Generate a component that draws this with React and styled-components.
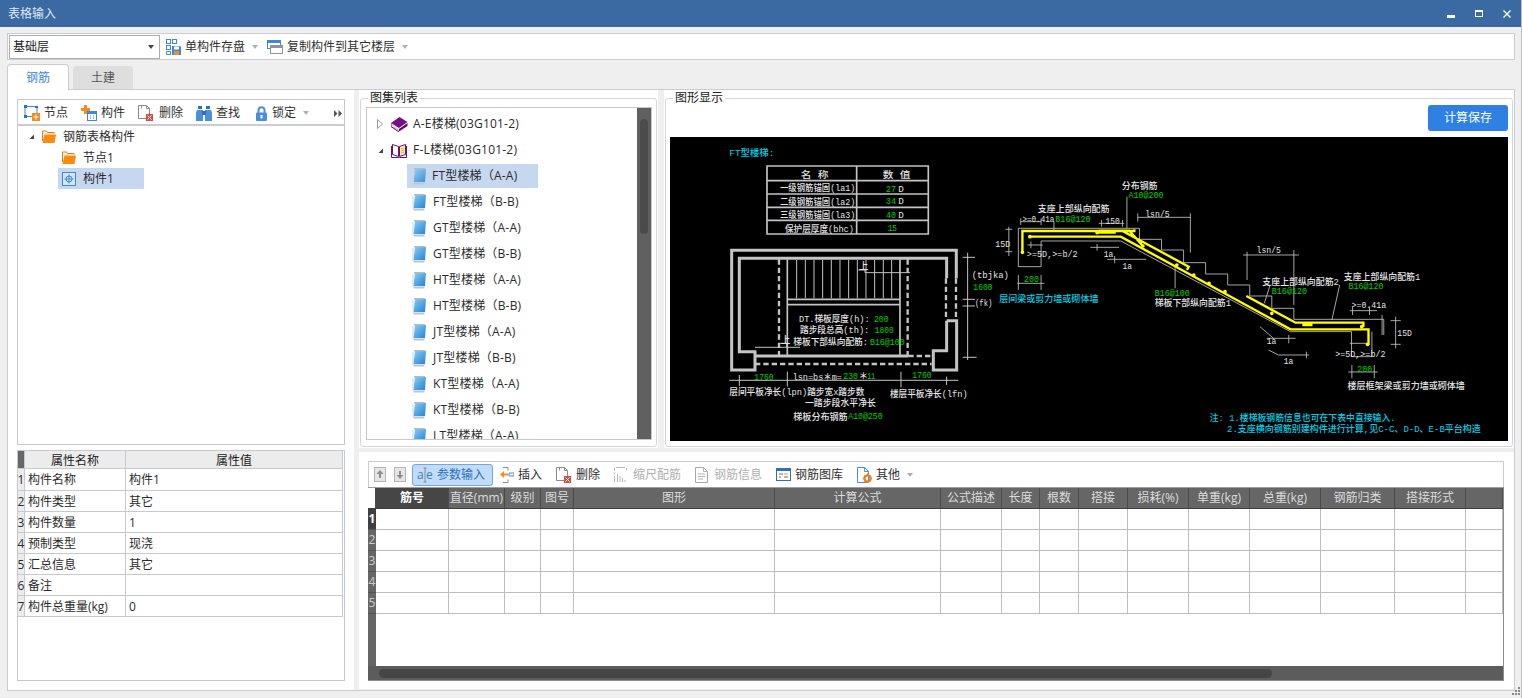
import React from "react";
import styled, { createGlobalStyle } from "styled-components";

const Global = createGlobalStyle`
  html, body { margin: 0; padding: 0; background: #efefef; overflow: hidden; }
  * { box-sizing: border-box; }
  body { font: 12px/16px "Open Sans", "Noto Sans CJK SC", sans-serif; color: #2b2b2b; }
`;

const Win = styled.div`width: 1522px; height: 698px; display: flex; flex-direction: column; border-right: 1px solid #b9bdc3; background: #efefef;`;
const TitleBar = styled.header`height: 27px; flex: none; background: #3b6aa3; color: #dfe8f3; display: flex; align-items: center; padding: 0 10px 0 8px; justify-content: space-between;`;
const WinBtns = styled.div`display: flex; gap: 20px; align-items: center;`;
const Main = styled.main`flex: 1; padding: 6px 6px 0 7px; display: flex; flex-direction: column;`;
const TopBar = styled.div`height: 27px; flex: none; border: 1px solid #c9cdd1; background: #fff; display: flex; align-items: center; padding-left: 1px;`;
const FloorSelect = styled.div`width: 151px; height: 24px; border: 1px solid #a9aeb4; color: #1a1a1a; display: flex; align-items: center; justify-content: space-between; padding: 0 5px 0 3px; margin-right: 6px;`;
const Caret = styled.i`display: inline-block; width: 0; height: 0; border: 3px solid transparent; border-top: 4px solid ${p => p.$tone || "#aab0b6"}; border-bottom: 0; margin-left: ${p => p.$left ?? 3}px;`;
const Tool = styled.span`display: inline-flex; align-items: center; gap: ${p => p.$gap ?? 4}px; margin-left: ${p => p.$before ?? 0}px; margin-right: ${p => p.$space ?? 0}px; color: ${p => p.$off ? "#b0b0b0" : "#303030"}; white-space: nowrap; flex: none;`;
const TabRow = styled.nav`height: 26px; margin-top: 4px; margin-bottom: -1px; display: flex; align-items: flex-end; gap: 4px; position: relative; z-index: 1; flex: none;`;
const Tab = styled.div`
  height: ${p => p.$on ? 26 : 23}px; width: ${p => p.$on ? 62 : 60}px; margin-bottom: ${p => p.$on ? 0 : 1}px; display: flex; align-items: center; justify-content: center;
  background: ${p => p.$on ? "#fff" : "#dedede"}; color: ${p => p.$on ? "#3f86e2" : "#555"};
  border: ${p => p.$on ? "1px solid #c9cdd1" : "0"}; border-bottom: 0; border-radius: 4px 4px 0 0;
`;
const Pane = styled.section`width: 1508px; height: 602px; flex: none; border: 1px solid #c9cdd1; background: #fff; display: grid; grid-template-columns: 346px 1fr;`;
const LeftCol = styled.div`padding: 9px 9px 8px; display: flex; flex-direction: column; gap: 5px;`;
const Panel = styled.div`border: 1px solid #c5c9ce; background: #fff;`;
const TreePanel = styled(Panel)`height: 346px;`;
const TreeBar = styled.div`height: 26px; display: flex; align-items: center; padding: 2px 2px 0 6px; border-bottom: 2px solid #c9cdd1;`;
const MoreArrows = styled.span`margin-left: auto; margin-right: 0;`;
const Tree = styled.div`padding: 0;`;
const TreeRow = styled.div`height: 21px; display: flex; align-items: center; gap: ${p => p.$gap ?? 6}px; margin-left: ${p => p.$indent}px; width: ${p => p.$w ? p.$w + "px" : "auto"}; background: ${p => p.$sel ? "#c6d8ef" : "transparent"}; padding-left: ${p => p.$pad ?? 0}px;`;
const PropsPanel = styled(Panel)`height: 231px;`;
const propCols = "7px 101px 217px";
const PropRow = styled.div`display: grid; grid-template-columns: ${propCols}; height: ${p => p.$h || 21}px;`;
const PropCell = styled.div`
  border-right: 1px solid #c3cad4; border-bottom: 1px solid #c3cad4; display: flex; align-items: center; padding: ${p => p.$head ? "2px 0 0" : "1px 0 0 3px"}; overflow: hidden;
  justify-content: ${p => p.$head ? "center" : "flex-start"}; background: ${p => p.$head ? "#ececec" : "#fff"}; color: ${p => p.$head ? "#222" : "#2b2b2b"};
`;
const PropNum = styled.div`border-right: 1px solid #c3cad4; border-bottom: 1px solid #c3cad4; background: ${p => p.$corner ? "#666" : "#ececec"}; display: flex; align-items: center; justify-content: center; font-size: 12px; overflow: visible; padding-top: 1px;`;
const RightCol = styled.div`background: #efefef; padding-left: 5px; display: flex; flex-direction: column; gap: 5px; min-width: 0;`;
const TopRow = styled.div`display: grid; grid-template-columns: 299px 1fr; gap: 6px; height: 357px;`;
const GroupCell = styled.div`background: #fff; min-width: 0; padding: 0 1px 1px;`;
const Group = styled.fieldset`margin: 0; padding: 1px ${p => p.$r}px ${p => p.$b}px ${p => p.$l}px; height: 100%; border: 1px solid #d4d6d9; border-radius: 3px; min-width: 0; display: block;`;
const GroupLegend = styled.legend`margin-left: ${p => p.$left ?? 2}px; padding: 0 2px; line-height: 16px; color: #222;`;
const AtlasList = styled.div`height: 333px; border: 1px solid #c5c9ce; position: relative; overflow: hidden; padding-top: 3px; letter-spacing: .2px;`;
const AtlasRow = styled.div`height: 26px; display: flex; align-items: center; padding-left: ${p => p.$indent}px;`;
const AtlasRowInner = styled.div`height: 24px; width: ${p => p.$w}px; display: flex; align-items: center; gap: ${p => p.$gap ?? 6}px; background: ${p => p.$sel ? "#c6d8ef" : "transparent"}; padding-left: ${p => p.$pad ?? 0}px;`;
const Expander = styled.span`display: block; flex: none; margin-right: ${p => p.$space}px;`;
const ListScroll = styled.div`position: absolute; right: 0; top: 0; bottom: 0; width: 14px; background: #606060;`;
const ListThumb = styled.div`margin: 11px auto 0; width: 8px; height: 115px; border-radius: 4px; background: #4b4b4b;`;
const ActionRow = styled.div`display: flex; justify-content: flex-end; margin-top: -2px;`;
const CalcBtn = styled.button`width: 80px; height: 26px; border: 0; border-radius: 3px; background: #2f80e3; color: #fff; font: inherit;`;
const Drawing = styled.svg`display: block; margin-top: 6px; background: #000; width: 838px; height: 304px; flex: none;`;
const BottomCell = styled.div`height: 237px; background: #fff; padding: 9px 0 0 9px;`;
const GridBar = styled.div`width: 1136px; height: 26px; border: 1px solid #c9cdd1; border-bottom: 0; display: flex; align-items: center; padding-left: 5px; gap: 14px;`;
const ActiveTool = styled.span`width: 81px; height: 22px; border: 1px solid #6ea9e4; border-radius: 3px; background: #c0dcf9; color: #2c6fbf; display: inline-flex; align-items: center; padding-left: 4px; gap: 4px; white-space: nowrap; margin: 0 -7px 0 -8px;`;
const Stepper = styled.span`display: inline-flex; gap: 8px; margin-right: 0;`;
const GridBox = styled.div`width: 1136px; height: 194px; display: flex; flex-direction: column; border-right: 1px solid #8a8e94; border-bottom: 1px solid #8a8e94; border-top: 1px solid #9b9fa5;`;
const gridCols = "8px 73px 56px 36px 33px 201px 166px 61px 38px 39px 49px 61px 61px 71px 74px 71px 37px";
const GridHead = styled.div`display: grid; grid-template-columns: ${gridCols}; height: 21px; flex: none; background: #666;`;
const HeadCell = styled.div`
  display: flex; align-items: center; justify-content: center; white-space: nowrap; border-right: 1px solid #4a4a4a; border-bottom: 1px solid #3e3e3e;
  background: ${p => p.$corner ? "#fff" : p.$sel ? "#464646" : "#666"}; color: ${p => p.$sel ? "#fff" : "#dcdcdc"}; font-weight: ${p => p.$sel ? 700 : 400};
`;
const GridRow = styled.div`display: grid; grid-template-columns: ${gridCols}; height: 21px; flex: none;`;
const RowNum = styled.div`background: ${p => p.$sel ? "#404040" : "#666"}; color: ${p => p.$sel ? "#fff" : "#ccc"}; font-weight: ${p => p.$sel ? 700 : 400}; display: flex; align-items: center; justify-content: center; overflow: visible; border-bottom: 1px solid #555;`;
const GridCell = styled.div`border-right: 1px solid #bdbdbd; border-bottom: 1px solid #bdbdbd; background: #fff;`;
const GridFill = styled.div`flex: 1; background: #fff; border-left: 8px solid #666;`;
const HScroll = styled.div`height: 14px; flex: none; background: #5c5c5c; padding: 3px 0 2px 11px;`;
const HThumb = styled.div`width: 893px; height: 9px; border-radius: 5px; background: #454545;`;
const Grip = styled.svg`position: absolute; right: 2px; bottom: 3px;`;
const WinFrame = styled.div`position: relative;`;

const CadLine = styled.path`fill: none; stroke: ${p => p.$c || "#c4c4c4"}; stroke-width: ${p => p.$w || 3}px;`;
const CadText = styled.text`font-family: "Liberation Mono", "Noto Sans CJK SC", monospace; font-size: 28px; font-weight: 500; fill: ${p => ({ g: "#00d000", c: "#00d0e8" }[p.$t] || "#e4e4e4")};`;

const L = ({ x, y, t, c, w }) => (
  <CadText x={x} y={y + 3} $t={c} dominantBaseline="central" textLength={w} lengthAdjust={w ? "spacingAndGlyphs" : undefined}>{t}</CadText>
);

/* ---------- icons ---------- */
const Svg = ({ s = 16, w, h, children }) => <svg width={w || s} height={h || s} viewBox={`0 0 ${w || s} ${h || s}`} style={{ display: "block", flex: "none" }}>{children}</svg>;
const blue = "#3f87d8";
const FloorSave = () => (<Svg w={15} h={16}><rect x=".5" y=".5" width="4" height="4" fill="none" stroke={blue} /><rect x="6.5" y=".5" width="4" height="4" fill="none" stroke={blue} /><rect x=".5" y="6.5" width="4" height="4" fill="none" stroke={blue} /><path d="M.5 12.5h4v3h-4z" fill="none" stroke={blue} /><path d="M6 7h8l1 1v8H6z" fill="#3f87d8" /><rect x="8" y="7.500" width="5" height="3" fill="#fff" /><rect x="8" y="12" width="5" height="4" fill="#f39020" /></Svg>);
const CopyFloor = () => (<Svg s={16}><rect x=".5" y="1.500" width="13" height="8" fill="#fff" stroke={blue} /><rect x="0" y="1" width="14" height="3" fill={blue} /><rect x="3.500" y="6.500" width="12" height="8" fill="#fff" stroke="#8d9399" /><rect x="3" y="6" width="13" height="3" fill="#8d9399" /></Svg>);
const NodeIcon = () => (<Svg s={16}><rect x="1" y="1.500" width="12" height="10" fill="none" stroke="#3f87d8" strokeWidth="1" /><rect x="0" y="0" width="3" height="3" fill="#2f6fb8" /><rect x="11" y="1" width="3" height="2" fill="#2f6fb8" /><rect x="0" y="10" width="3" height="3" fill="#2f6fb8" /><rect x="8" y="8" width="8" height="8" fill="#f58c1e" /><path d="M12 9.500v5M9.500 12h5" stroke="#fff" /></Svg>);
const PartIcon = () => (<Svg s={16}><path d="M3 0h3v3h3v3H6v3H3V6H0V3h3z" fill="#f58c1e" /><rect x="6.500" y="6.500" width="9" height="9" fill="#fff" stroke={blue} /><rect x="6" y="6" width="10" height="3" fill={blue} /><path d="M9 11h1M12 11h1M9 13h1M12 13h1" stroke={blue} /></Svg>);
const DelDoc = () => (<Svg s={16}><path d="M.5.5h8l3 3v10H.5z" fill="#fff" stroke="#8c8c8c" /><path d="M3.500 3.500v-3" stroke="#8c8c8c" /><path d="M8.500.5v3h3" fill="none" stroke="#8c8c8c" /><rect x="8" y="9" width="7" height="7" fill="#d94b43" /><path d="M9.500 10.500l4 4M13.500 10.500l-4 4" stroke="#fff" /></Svg>);
const Binoc = () => (<Svg w={16} h={15}><path d="M2 0h4v3H2zM10 0h4v3h-4z" fill="#2f6fb8" /><path d="M1 4h6v11H0V7zM9 4h6l1 3v8H9z" fill="#4b8fdc" /><rect x="6" y="5" width="4" height="4" fill="#2f6fb8" /></Svg>);
const Lock = () => (<Svg w={13} h={15}><path d="M3.500 7V4.200a3 3 0 0 1 6 0V7" fill="none" stroke="#4b8fdc" strokeWidth="2" /><rect x="1" y="6.500" width="11" height="8.500" rx="1" fill="#4b8fdc" /><rect x="5.500" y="9" width="2" height="3.500" fill="#fff" /></Svg>);
const Folder = () => (<Svg w={14} h={13}><path d="M.5 11V1h4l1 1.500h6.500V4" fill="none" stroke="#e8780a" /><path d="M1.500 3h10v1h-10z" fill="#ffe2bd" /><path d="M2.500 4.500H14L12.500 13H0.500z" fill="#ff8a10" /></Svg>);
const PartTree = () => (<Svg s={14}><rect x=".5" y=".5" width="13" height="13" fill="#d4e6fa" stroke={blue} /><circle cx="7" cy="7" r="3" fill="none" stroke={blue} /><path d="M7 2.500v9M2.500 7h9" stroke={blue} /></Svg>);
const TriDown = () => (<Svg s={7}><path d="M6 1.500V6H1.500z" fill="#444" /></Svg>);
const TriRight = () => (<Svg w={6} h={10}><path d="M.5.5L5.500 5 .5 9.500z" fill="#fff" stroke="#999" /></Svg>);
const MoreIcon = () => (<Svg w={8} h={7}><path d="M0 0l3.500 3.500L0 7zM4.500 0L8 3.500 4.500 7z" fill="#555" /></Svg>);
const BookClosed = () => (<Svg w={17} h={15}><path d="M8.500 0l8 5-8.500 6L0 6z" fill="#7a0f82" /><path d="M1 7l7 5v2.500L1.500 10.500z" fill="#d9c7dc" /><path d="M8 12l8.500-6v3L8 14.500z" fill="#5b0a62" /><path d="M0 6v3.500L8 15" fill="none" stroke="#5b0a62" /></Svg>);
const BookOpen = () => (<Svg w={16} h={16}><path d="M1.500 2.500l6 2v10l-6-2z" fill="#fff" stroke="#6b0f70" /><path d="M14.500 2.500l-6 2v10l6-2z" fill="#f8f0a8" stroke="#6b0f70" /><path d="M.5 4v11.500H7l1 .5 1-.5h6.500V4" fill="none" stroke="#6b0f70" /><path d="M10 7l3-1M10 9l3-1M10 11l3-1" stroke="#c9b560" /></Svg>);
const Note = ({ dim }) => (
  <Svg w={15} h={17}>
    <defs><linearGradient id="noteFill" x1="0" y1="0" x2="1" y2="1"><stop offset="0" stopColor="#8ccdf2" /><stop offset=".6" stopColor="#4ba0e2" /><stop offset="1" stopColor="#2f7fc8" /></linearGradient></defs>
    <path d="M3 1h11l-1 13H1.500z" fill="url(#noteFill)" opacity={dim ? .85 : 1} />
    <path d="M1.500 14.500h11v2h-11z" fill="#b7c6cf" />
    <path d="M2 0h11v1.500H2z" fill="#aebcc6" />
    <path d="M1 2v13" stroke="#c9d6dd" />
  </Svg>
);
const ArrowBox = ({ down }) => (<Svg w={12} h={15}><rect x=".5" y=".5" width="11" height="14" fill="#e6e6e6" stroke="#b4b4b4" /><path d={down ? "M6 12L2.500 8H5V4h2v4h2.500z" : "M6 3l3.500 4H7v4H5V7H2.500z"} fill="#8e8e8e" /></Svg>);
const ParamIcon = () => (<Svg w={16} h={18}><text x="0" y="13" fontFamily="Open Sans" fontSize="12" fill="#3f7fc8">a</text><text x="9" y="13" fontFamily="Open Sans" fontSize="12" fill="#3f7fc8">e</text><path d="M6.500 2h3M8 2v14M6.500 16h3" stroke="#8a8a8a" fill="none" /></Svg>);
const Insert = () => (<Svg w={14} h={16}><path d="M3 .5h5M8 .5v3M8 12.500v3M3 15.500h5" stroke="#8a8a8a" fill="none" /><path d="M9 6h5v3H9z" fill="none" stroke="#4b8fdc" /><path d="M0 7.500L4 4v2.500h4v2H4V11z" fill="#f58c1e" /></Svg>);
const Scale = () => (<Svg w={13} h={16}><path d="M.5 1v3M.5 5.500v2M.5 9v6.500M2 .5h9M12.500 1v2M3.500 7v8M6 9v6M8.500 11v4M11 13v2" stroke="#b8b8b8" /></Svg>);
const InfoDoc = () => (<Svg w={13} h={16}><path d="M.5.5h8l4 4v11H.5z" fill="#fff" stroke="#a8a8a8" /><path d="M8.500.5v4h4M3 7h7M3 9.500h7M3 12h5" fill="none" stroke="#b4b4b4" /></Svg>);
const Library = () => (<Svg w={15} h={13}><rect x=".5" y=".5" width="14" height="12" fill="#fff" stroke="#2f6fb8" /><rect x="0" y="0" width="15" height="3" fill="#2f6fb8" /><path d="M3 6h4M3 9h2M8 9h4" stroke="#6a6a6a" /><path d="M8 6h4" stroke="#e0a030" /></Svg>);
const Other = () => (<Svg w={15} h={16}><path d="M.5.5h7l4 4v11H.5z" fill="#fff" stroke="#4b8fdc" /><path d="M7.500.5v4h4" fill="none" stroke="#4b8fdc" /><circle cx="10.500" cy="11.500" r="3" fill="none" stroke="#f0801a" strokeWidth="2.200" /><path d="M10.500 6.500v2M10.500 14.500v1.500M6 11.500h2M13 11.500h2M7.500 8.500l1 1M12.500 13.500l1 1M13.500 8.500l-1 1M8.500 13.500l-1 1" stroke="#f0801a" strokeWidth="1.500" /></Svg>);

const heads = ["直径(mm)", "级别", "图号", "图形", "计算公式", "公式描述", "长度", "根数", "搭接", "损耗(%)", "单重(kg)", "总重(kg)", "钢筋归类", "搭接形式", ""];
const emptyCols = Array.from({ length: 16 });
const props = [["构件名称", "构件1"], ["构件类型", "其它"], ["构件数量", "1"], ["预制类型", "现浇"], ["汇总信息", "其它"], ["备注", ""], ["构件总重量(kg)", "0"]];
const atlas = ["FT型楼梯（B-B)", "GT型楼梯（A-A)", "GT型楼梯（B-B)", "HT型楼梯（A-A)", "HT型楼梯（B-B)", "JT型楼梯（A-A)", "JT型楼梯（B-B)", "KT型楼梯（A-A)", "KT型楼梯（B-B)", "LT型楼梯（A-A)"];

const Plan = () => (
  <g transform="translate(670 130) scale(.3333)">
    <L x={178} y={68} t="FT型楼梯:" c="c" w={135} />
    <CadLine $w={5} d="M291 108H775V312H291ZM291 152H775M291 192H775M291 232H775M291 271H775M560 108V312" />
    <L x={392} y={135} t="名   称" w={84} /><L x={638} y={133} t="数   值" w={84} />
    <L x={330} y={173} t="一级钢筋锚固(la1)" w={226} /><L x={648} y={177} t="27" c="g" w={30} /><L x={685} y={177} t="D" />
    <L x={330} y={215} t="二级钢筋锚固(la2)" w={226} /><L x={648} y={213} t="34" c="g" w={30} /><L x={685} y={213} t="D" />
    <L x={330} y={254} t="三级钢筋锚固(la3)" w={226} /><L x={648} y={255} t="40" c="g" w={30} /><L x={685} y={255} t="D" />
    <L x={345} y={296} t="保护层厚度(bhc)" w={207} /><L x={653} y={294} t="15" c="g" w={28} />

    <CadLine $w={9} d="M859 445V361H185V720H255V665H208V385H830V445M830 572H860V720H790V662H830V572" />
    <CadLine $w={9} d="M255 678H715" />
    <CadLine $w={7} d="M828 445V570M858 445V570M255 702H785M715 678H785M327 388V678M713 388V678" strokeDasharray="16 9" />
    <CadLine $w={5} d="M352 388V678M690 388V678M352 508H690M352 524H690" />
    <CadLine $w={3} d="M380 390V505M406 390V505M432 390V505M458 390V505M484 390V505M510 390V505M536 390V505M562 390V505M588 390V505M614 390V505M640 390V505M665 390V505" />
    <CadLine $w={3} d="M565 420H585V428H720M255 652H390M330 640H350V652" />
    <L x={567} y={407} t="上" /><L x={333} y={628} t="上" />
    <L x={387} y={565} t="DT.梯板厚度(h):" w={212} /><L x={612} y={567} t="200" c="g" w={44} />
    <L x={390} y={600} t="踏步段总高(th):" w={208} /><L x={614} y={600} t="1800" c="g" w={57} />
    <L x={370} y={635} t="梯板下部纵向配筋:" w={224} /><L x={600} y={636} t="B16@100" c="g" w={104} />
    <CadLine d="M178 751H865M208 735V768M352 725V770M693 725V772M830 740V765M893 368V690M878 382H915M878 508H915M878 528H915M878 682H920" />
    <L x={253} y={741} t="1760" c="g" w={58} /><L x={368} y={739} t="lsn=bs＊m=" w={148} /><L x={520} y={738} t="230" c="g" w={44} /><L x={566} y={738} t="＊" /><L x={592} y={738} t="11" c="g" w={24} /><L x={727} y={735} t="1760" c="g" w={58} />
    <L x={178} y={785} t="层间平板净长(lpn)踏步宽x踏步数" w={405} /><L x={405} y={818} t="一踏步段水平净长" w={213} />
    <L x={660} y={792} t="楼层平板净长(lfn)" w={233} /><L x={370} y={860} t="梯板分布钢筋" w={163} /><L x={535} y={858} t="A10@250" c="g" w={103} />
    <L x={905} y={434} t="(tbjka)" w={112} /><L x={910} y={471} t="1600" c="g" w={58} /><L x={915} y={518} t="(fk)" w={52} />
  </g>
);

const Rebar = () => (
  <g transform="translate(980 170) scale(.3393 .3333)">
    <CadLine $w={2.500} d="M180 290H113V175H470V208H535V240H600V278H665V312H730V345H795V378H860V415H925V448H1190V495M180 290V213H415L915 485H1095V560H1155V485" />
    <CadLine $w={2.500} d="M120 155H180M120 145V165M180 145V165M75 178H95M75 245H95M85 170V258M140 225H185M150 215V235M325 232H410M345 222V242M375 268H490M397 258V280M465 142H620M465 130V155M620 130V248M350 160H425M358 150V170M420 150V170M433 80V175M575 290V355M775 255H940M787 245V330M925 240V405M1090 422H1170M1098 410V435M1148 410V435M1210 452H1240M1225 440V535M1210 523H1240M1185 435V495M1090 520H1140M845 505H930M910 495V520M880 555H970M962 545V565M825 470L865 505M850 540L880 555M110 340H190M113 315V360M180 315V360M1085 606H1172M1096 585V625M1162 585V625M855 345L838 400M1060 345L1037 450M218 155V185" />
    <CadLine $c="#ffff00" $w={7} d="M125 245V183H355H455V178M345 188H400M145 200H415L915 478H1145V525M785 378L930 458H1130V470M420 183L615 290L610 300M350 182H440L480 228M950 465H980" />
    <CadLine $c="#ffff00" $w={11} strokeLinecap="round" d="M125 247h.1M147 200h.1M345 188h.1M1125 470h.1M1142 523h.1M630 315h.1M675 340h.1M722 365h.1M860 430h.1M480 228h.1M580 285h.1" />
    <L x={418} y={48} t="分布钢筋" w={105} /><L x={438} y={75} t="A10@200" c="g" w={103} />
    <L x={170} y={117} t="支座上部纵向配筋" w={212} /><L x={125} y={145} t=">=0.41a" w={94} /><L x={222} y={147} t="B16@120" c="g" w={104} />
    <L x={370} y={152} t="150" w={42} /><L x={45} y={220} t="15D" w={44} /><L x={138} y={252} t=">=5D,>=b/2" w={150} />
    <L x={365} y={250} t="1a" w={28} /><L x={420} y={288} t="1a" w={28} /><L x={487} y={130} t="lsn/5" w={72} /><L x={815} y={240} t="lsn/5" w={72} />
    <L x={130} y={327} t="200" c="g" w={44} /><L x={57} y={387} t="层间梁或剪力墙或砌体墙" c="c" w={292} />
    <L x={515} y={369} t="B16@100" c="g" w={103} /><L x={515} y={399} t="梯板下部纵向配筋1" w={225} />
    <L x={832} y={334} t="支座上部纵向配筋2" w={226} /><L x={860} y={363} t="B16@120" c="g" w={104} />
    <L x={1072} y={321} t="支座上部纵向配筋1" w={226} /><L x={1086} y={348} t="B16@120" c="g" w={103} />
    <L x={1095} y={403} t=">=0.41a" w={102} /><L x={1230} y={487} t="15D" w={43} /><L x={845} y={513} t="1a" w={28} /><L x={895} y={573} t="1a" w={28} />
    <L x={1047} y={552} t=">=5D,>=b/2" w={148} /><L x={1112} y={595} t="200" c="g" w={44} /><L x={1083} y={647} t="楼层框架梁或剪力墙或砌体墙" w={346} />
    <L x={677} y={742} t="注: 1.楼梯板钢筋信息也可在下表中直接输入." c="c" w={548} />
    <L x={728} y={775} t="2.支座横向钢筋别建构件进行计算,见C-C、D-D、E-B平台构造" c="c" w={748} />
  </g>
);

export default function App() {
  return (
    <WinFrame>
      <Global />
      <Win>
        <TitleBar>
          <span>表格输入</span>
          <WinBtns>
            <Svg w={8} h={8}><rect x="0" y="5" width="8" height="3" fill="#fff" /></Svg>
            <Svg w={8} h={8}><rect x=".5" y=".5" width="7" height="6" fill="none" stroke="#fff" /><rect x="0" y="0" width="8" height="2" fill="#fff" /></Svg>
            <Svg w={8} h={8}><path d="M.5.5l7 7M7.500.5l-7 7" stroke="#fff" strokeWidth="1.400" /></Svg>
          </WinBtns>
        </TitleBar>
        <Main>
          <TopBar>
            <FloorSelect>基础层<Caret $tone="#444" $left={0} /></FloorSelect>
            <Tool><FloorSave />单构件存盘<Caret /></Tool>
            <Tool $before={9}><CopyFloor />复制构件到其它楼层<Caret /></Tool>
          </TopBar>
          <TabRow>
            <Tab $on>钢筋</Tab>
            <Tab>土建</Tab>
          </TabRow>
          <Pane>
            <LeftCol>
              <TreePanel>
                <TreeBar>
                  <Tool $space={13}><NodeIcon />节点</Tool>
                  <Tool $space={13}><PartIcon />构件</Tool>
                  <Tool $space={13} $gap={5}><DelDoc />删除</Tool>
                  <Tool $space={15}><Binoc />查找</Tool>
                  <Tool><Lock />锁定<Caret /></Tool>
                  <MoreArrows><MoreIcon /></MoreArrows>
                </TreeBar>
                <Tree>
                  <TreeRow $indent={10} $gap={7}><TriDown /><Folder />钢筋表格构件</TreeRow>
                  <TreeRow $indent={44} $gap={7}><Folder />节点1</TreeRow>
                  <TreeRow $indent={40} $w={86} $sel $pad={4} $gap={7}><PartTree />构件1</TreeRow>
                </Tree>
              </TreePanel>
              <PropsPanel>
                <PropRow $h={18}>
                  <PropNum $corner />
                  <PropCell $head>属性名称</PropCell>
                  <PropCell $head>属性值</PropCell>
                </PropRow>
                {props.map(([k, v], i) => (
                  <PropRow key={k} $h={i === 0 ? 22 : 21}>
                    <PropNum>{i + 1}</PropNum>
                    <PropCell>{k}</PropCell>
                    <PropCell>{v}</PropCell>
                  </PropRow>
                ))}
              </PropsPanel>
            </LeftCol>
            <RightCol>
              <TopRow>
                <GroupCell>
                  <Group $l={5} $r={4} $b={5}>
                    <GroupLegend>图集列表</GroupLegend>
                    <AtlasList>
                      <AtlasRow $indent={10}><AtlasRowInner $w={200} $gap={5}><Expander $space={3}><TriRight /></Expander><BookClosed />A-E楼梯(03G101-2)</AtlasRowInner></AtlasRow>
                      <AtlasRow $indent={10}><AtlasRowInner $w={200}><Expander $space={1}><TriDown /></Expander><BookOpen />F-L楼梯(03G101-2)</AtlasRowInner></AtlasRow>
                      <AtlasRow $indent={40}><AtlasRowInner $w={131} $sel $pad={5} $gap={5}><Note dim />FT型楼梯（A-A)</AtlasRowInner></AtlasRow>
                      {atlas.map(t => <AtlasRow key={t} $indent={45}><AtlasRowInner $w={126}><Note />{t}</AtlasRowInner></AtlasRow>)}
                      <ListScroll><ListThumb /></ListScroll>
                    </AtlasList>
                  </Group>
                </GroupCell>
                <GroupCell>
                  <Group $l={4} $r={4} $b={5}>
                    <GroupLegend $left={3}>图形显示</GroupLegend>
                    <ActionRow><CalcBtn>计算保存</CalcBtn></ActionRow>
                    <Drawing viewBox="670 137 838 304"><Plan /><Rebar /></Drawing>
                  </Group>
                </GroupCell>
              </TopRow>
              <BottomCell>
                <GridBar>
                  <Stepper><ArrowBox /><ArrowBox down /></Stepper>
                  <ActiveTool><ParamIcon />参数输入</ActiveTool>
                  <Tool><Insert />插入</Tool>
                  <Tool><DelDoc />删除</Tool>
                  <Tool $off $gap={6}><Scale />缩尺配筋</Tool>
                  <Tool $off $gap={6}><InfoDoc />钢筋信息</Tool>
                  <Tool><Library />钢筋图库</Tool>
                  <Tool><Other />其他<Caret /></Tool>
                </GridBar>
                <GridBox>
                  <GridHead>
                    <HeadCell $corner />
                    <HeadCell $sel>筋号</HeadCell>
                    {heads.map((h, i) => <HeadCell key={i}>{h}</HeadCell>)}
                  </GridHead>
                  {[1, 2, 3, 4, 5].map(n => (
                    <GridRow key={n}>
                      <RowNum $sel={n === 1}>{n}</RowNum>
                      {emptyCols.map((_, i) => <GridCell key={i} />)}
                    </GridRow>
                  ))}
                  <GridFill />
                  <HScroll><HThumb /></HScroll>
                </GridBox>
              </BottomCell>
            </RightCol>
          </Pane>
        </Main>
      </Win>
      <Grip width="8" height="8" viewBox="0 0 8 8"><path d="M6 0h2v2H6zM6 3h2v2H6zM3 3h2v2H3zM6 6h2v2H6zM3 6h2v2H3zM0 6h2v2H0z" fill="#888" /></Grip>
    </WinFrame>
  );
}
